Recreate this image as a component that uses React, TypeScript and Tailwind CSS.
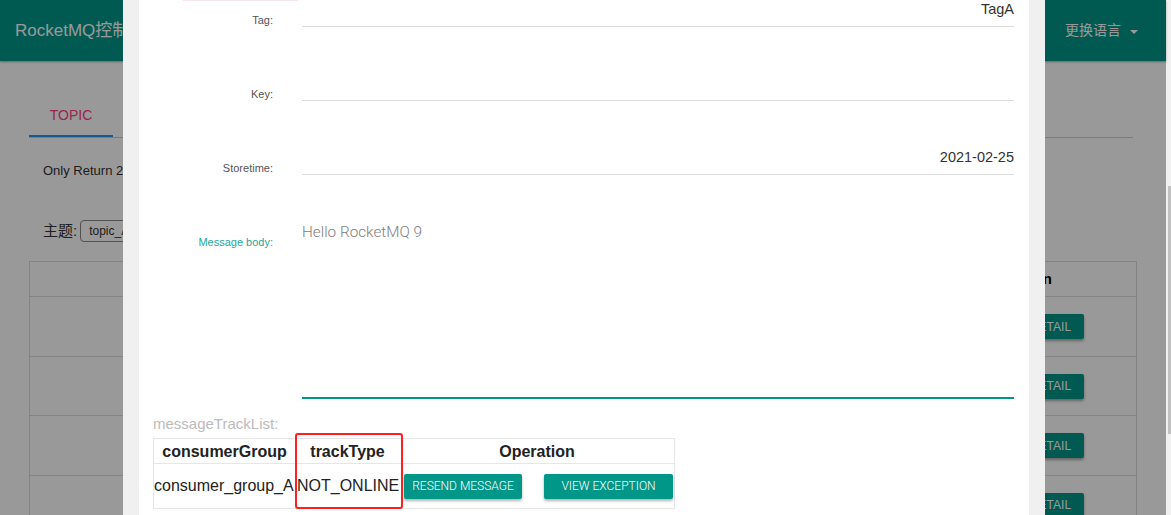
import React from 'react'

const fieldRows = [
  { label: 'Tag:', value: 'TagA' },
  { label: 'Key:', value: '' },
  { label: 'Storetime:', value: '2021-02-25' },
]

function BackgroundPage() {
  return (
    <div className="h-full bg-white">
      {/* top bar */}
      <div className="flex h-[61px] items-center justify-between bg-[#009688] pl-[15px] pr-[28px] shadow-[0_1px_2px_rgba(0,0,0,0.35)]">
        <span className="text-[17px] text-white">RocketMQ控制台</span>
        <span className="flex items-center text-[14px] text-white">
          更换语言
          <span className="ml-[9px] mt-[2px] h-0 w-0 border-x-[4px] border-t-[4px] border-x-transparent border-t-white" />
        </span>
      </div>

      <div className="pl-[29px] pr-[33px]">
        {/* tabs */}
        <div className="mt-[28px] flex border-b border-[#cfcfcf]">
          <div className="flex h-[48px] w-[84px] items-center justify-center border-b-2 border-[#2196f3] pt-[6px] text-[14px] text-[#ff4081]">
            TOPIC
          </div>
        </div>

        <div className="mt-[23px] pl-[14px] text-[13px] text-[#333]">Only Return 2000 Messages</div>

        <div className="mt-[39px] flex items-center pl-[14px] text-[15px] text-[#333]">
          <span>主题:</span>
          <span className="ml-[3px] flex h-[22px] w-[180px] items-center rounded-[4px] border border-[#888] px-[8px] text-[12px]">
            topic_A
          </span>
        </div>

        {/* message table */}
        <div className="mt-[19px] w-[1108px] border border-[#dadada]">
          <div className="flex h-[35px] items-center border-b border-[#dadada] text-[15px] font-bold text-black">
            <span className="ml-[951px]">Operation</span>
          </div>
          {[0, 1, 2, 3].map(i => (
            <div key={i} className="h-[59.5px] border-b border-[#dadada] pt-[17px]">
              <div className="ml-[987px] flex h-[25px] w-[67px] items-center justify-center rounded-[2px] bg-[#009688] text-[12px] text-white shadow-[0_2px_3px_rgba(0,0,0,0.35)]">
                DETAIL
              </div>
            </div>
          ))}
        </div>
      </div>
    </div>
  )
}

function MessageDialog() {
  return (
    <div className="absolute left-[123px] top-0 h-[515px] w-[922px] bg-[#f0f0f0] px-[16px]">
      <div className="relative h-full overflow-hidden bg-white">
        <div className="absolute left-[44px] top-0 h-px w-[115px] bg-[#f5e6e9]" />

        {fieldRows.map(row => (
          <div key={row.label} className="flex h-[74px]">
            <div className="w-[134px] pt-[13px] text-right text-[11px] leading-[14px] text-[#555]">{row.label}</div>
            <div className="ml-[29px] mr-[15px] flex h-[27px] flex-1 items-center justify-end border-b border-[#dcdcdc] pb-[6px] text-[14.5px] text-[#333]">
              {row.value}
            </div>
          </div>
        ))}

        <div className="flex h-[177px]">
          <div className="w-[134px] pt-[13px] text-right text-[11px] leading-[14px] text-[#26a69a]">Message body:</div>
          <div className="ml-[29px] mr-[15px] flex-1 border-b-2 border-[#009688] font-['Roboto',sans-serif] text-[15.3px] font-light leading-[20px] text-[#808080]">
            Hello RocketMQ 9
          </div>
        </div>

        <div className="ml-[14px] mt-[16px] text-[15px] leading-[18px] text-[#bbb]">messageTrackList:</div>

        <div className="ml-[14px] mt-[5px] w-[522px] border border-[#e6e6e6] text-[16px] text-[#222]">
          <div className="flex h-[25px] items-center border-b border-[#e6e6e6] pt-[1px] font-bold">
            <div className="w-[141px] text-center">consumerGroup</div>
            <div className="w-[105px] text-center">trackType</div>
            <div className="flex-1 text-center">Operation</div>
          </div>
          <div className="flex h-[44px] items-center">
            <div className="w-[141px] whitespace-nowrap">consumer_group_A</div>
            <div className="w-[105px] whitespace-nowrap pl-[2px]">NOT_ONLINE</div>
            <div className="flex flex-1 items-center pl-[4px] font-['Roboto',sans-serif] text-[12px] font-light text-white">
              <span className="flex h-[25px] w-[118px] items-center justify-center rounded-[2px] bg-[#009688] shadow-[0_2px_3px_rgba(0,0,0,0.3)]">
                RESEND MESSAGE
              </span>
              <span className="ml-[22px] flex h-[25px] w-[129px] items-center justify-center rounded-[2px] bg-[#009688] shadow-[0_2px_3px_rgba(0,0,0,0.3)]">
                VIEW EXCEPTION
              </span>
            </div>
          </div>
        </div>

        {/* highlight annotation */}
        <div className="absolute left-[156px] top-[433px] h-[76px] w-[108px] rounded-[3px] border-2 border-[#ff1f1f]" />
      </div>
    </div>
  )
}

export default function App() {
  return (
    <div className="flex h-[515px] w-[1171px] overflow-hidden font-['Liberation_Sans',Arial,'Noto_Sans_CJK_SC',sans-serif]">
      <div className="relative h-full w-[1166px]">
        <BackgroundPage />
        <div className="absolute inset-0 bg-black/40" />
        <MessageDialog />
      </div>
      {/* page scrollbar */}
      <div className="h-full w-[5px] bg-[#f1f1f1] pt-[186px]">
        <div className="ml-[2px] h-[248px] w-[3px] bg-[#c1c1c1]" />
      </div>
    </div>
  )
}
